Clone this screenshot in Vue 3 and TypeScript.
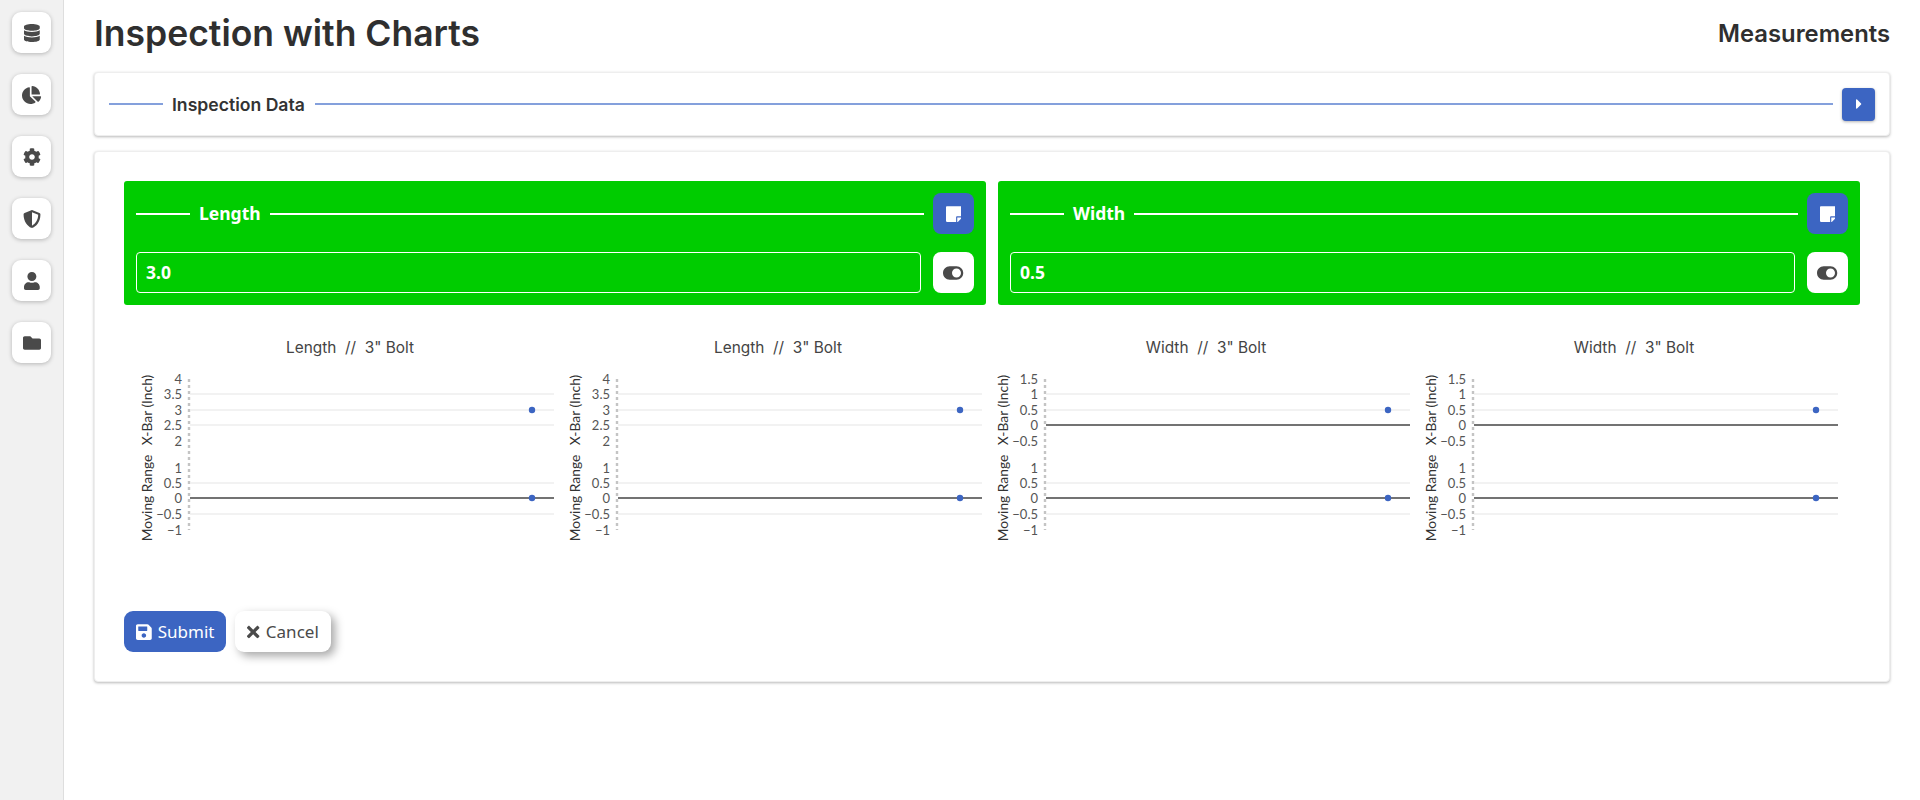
<script setup lang="ts">
interface IconDef {
  box: string
  d: string
}

const icons: Record<string, IconDef> = {
  database: {
    box: '0 0 448 512',
    d: 'M448 73.143v45.714C448 159.143 347.667 192 224 192S0 159.143 0 118.857V73.143C0 32.857 100.333 0 224 0s224 32.857 224 73.143zM448 176v102.857C448 319.143 347.667 352 224 352S0 319.143 0 278.857V176c48.125 33.143 136.208 48.572 224 48.572S399.874 209.143 448 176zm0 160v102.857C448 479.143 347.667 512 224 512S0 479.143 0 438.857V336c48.125 33.143 136.208 48.572 224 48.572S399.874 369.143 448 336z',
  },
  pie: {
    box: '0 0 544 512',
    d: 'M527.79 288H290.5l158.03 158.03c6.04 6.04 15.98 6.53 22.19.68 38.7-36.46 65.32-85.61 73.13-140.86 1.34-9.46-6.51-17.85-16.06-17.85zm-15.83-64.8C503.72 103.74 408.26 8.28 288.8.04 279.68-.59 272 7.1 272 16.24V240h223.77c9.14 0 16.82-7.68 16.19-16.8zM224 288V50.71c0-9.55-8.39-17.4-17.84-16.06C86.99 51.49-4.1 155.6.14 280.37 4.5 408.51 114.83 513.59 243.03 511.98c50.4-.63 96.97-16.87 135.26-44.03 7.9-5.6 8.42-17.23 1.57-24.08L224 288z',
  },
  cog: {
    box: '0 0 512 512',
    d: 'M487.4 315.7l-42.6-24.6c4.3-23.2 4.3-47 0-70.2l42.6-24.6c4.9-2.8 7.1-8.6 5.5-14-11.1-35.6-30-67.8-54.7-94.6-3.8-4.1-10-5.1-14.8-2.3L380.8 110c-17.9-15.4-38.5-27.3-60.8-35.1V25.8c0-5.6-3.9-10.5-9.4-11.7-36.7-8.2-74.3-7.8-109.2 0-5.5 1.2-9.4 6.1-9.4 11.7V75c-22.2 7.9-42.8 19.8-60.8 35.1L88.7 85.5c-4.9-2.8-11-1.9-14.8 2.3-24.7 26.7-43.6 58.9-54.7 94.6-1.7 5.4.6 11.2 5.5 14L67.3 221c-4.3 23.2-4.3 47 0 70.2l-42.6 24.6c-4.9 2.8-7.1 8.6-5.5 14 11.1 35.6 30 67.8 54.7 94.6 3.8 4.1 10 5.1 14.8 2.3l42.6-24.6c17.9 15.4 38.5 27.3 60.8 35.1v49.2c0 5.6 3.9 10.5 9.4 11.7 36.7 8.2 74.3 7.8 109.2 0 5.5-1.2 9.4-6.1 9.4-11.7v-49.2c22.2-7.9 42.8-19.8 60.8-35.1l42.6 24.6c4.9 2.8 11 1.9 14.8-2.3 24.7-26.7 43.6-58.9 54.7-94.6 1.5-5.5-.7-11.3-5.6-14.1zM256 336c-44.1 0-80-35.9-80-80s35.9-80 80-80 80 35.9 80 80-35.9 80-80 80z',
  },
  shield: {
    box: '0 0 512 512',
    d: 'M466.5 83.7l-192-80a48.15 48.15 0 0 0-36.9 0l-192 80C27.7 91.1 16 108.6 16 128c0 198.5 114.5 335.7 221.5 380.3 11.8 4.9 25.1 4.9 36.9 0C360.1 472.6 496 349.3 496 128c0-19.4-11.7-36.9-29.5-44.3zM256.1 446.3l-.1-381 175.9 73.3c-3.3 151.4-82.1 261.1-175.8 307.7z',
  },
  user: {
    box: '0 0 448 512',
    d: 'M224 256c70.7 0 128-57.3 128-128S294.7 0 224 0 96 57.3 96 128s57.3 128 128 128zm89.6 32h-16.7c-22.2 10.2-46.9 16-72.9 16s-50.6-5.8-72.9-16h-16.7C60.2 288 0 348.2 0 422.4V464c0 26.5 21.5 48 48 48h352c26.5 0 48-21.5 48-48v-41.6c0-74.2-60.2-134.4-134.4-134.4z',
  },
  folder: {
    box: '0 0 512 512',
    d: 'M464 128H272l-64-64H48C21.49 64 0 85.49 0 112v288c0 26.51 21.49 48 48 48h416c26.51 0 48-21.49 48-48V176c0-26.51-21.49-48-48-48z',
  },
  caret: {
    box: '0 0 192 512',
    d: 'M0 384.662V127.338c0-17.818 21.543-26.741 34.142-14.142l128.662 128.662c7.81 7.81 7.81 20.474 0 28.284L34.142 398.804C21.543 411.404 0 402.48 0 384.662z',
  },
  note: {
    box: '0 0 448 512',
    d: 'M312 320h136V56c0-13.3-10.7-24-24-24H24C10.7 32 0 42.7 0 56v400c0 13.3 10.7 24 24 24h264V344c0-13.2 10.8-24 24-24zm129 55l-98 98c-4.5 4.5-10.6 7-17 7h-6V352h128v6.1c0 6.3-2.5 12.4-7 16.9z',
  },
  toggle: {
    box: '0 0 576 512',
    d: 'M384 64H192C86 64 0 150 0 256s86 192 192 192h192c106 0 192-86 192-192S490 64 384 64zm0 320c-70.8 0-128-57.3-128-128 0-70.8 57.3-128 128-128 70.8 0 128 57.3 128 128 0 70.8-57.3 128-128 128z',
  },
  save: {
    box: '0 0 448 512',
    d: 'M433.941 129.941l-83.882-83.882A48 48 0 0 0 316.118 32H48C21.49 32 0 53.49 0 80v352c0 26.51 21.49 48 48 48h352c26.51 0 48-21.49 48-48V163.882a48 48 0 0 0-14.059-33.941zM224 416c-35.346 0-64-28.654-64-64 0-35.346 28.654-64 64-64s64 28.654 64 64c0 35.346-28.654 64-64 64zm96-304.52V212c0 6.627-5.373 12-12 12H76c-6.627 0-12-5.373-12-12V108c0-6.627 5.373-12 12-12h228.52c3.183 0 6.235 1.264 8.485 3.515l3.48 3.48A11.996 11.996 0 0 1 320 111.48z',
  },
  times: {
    box: '0 0 352 512',
    d: 'M242.72 256l100.07-100.07c12.28-12.28 12.28-32.19 0-44.48l-22.24-22.24c-12.28-12.28-32.19-12.28-44.48 0L176 189.28 75.93 89.21c-12.28-12.28-32.19-12.28-44.48 0L9.21 111.45c-12.28 12.28-12.28 32.19 0 44.48L109.28 256 9.21 356.07c-12.28 12.28-12.28 32.19 0 44.48l22.24 22.24c12.28 12.28 32.2 12.28 44.48 0L176 322.72l100.07 100.07c12.28 12.28 32.2 12.28 44.48 0l22.24-22.24c12.28-12.28 12.28-32.19 0-44.48L242.72 256z',
  },
}

const navItems = ['database', 'pie', 'cog', 'shield', 'user', 'folder']

const measures = [
  { name: 'Length', value: '3.0' },
  { name: 'Width', value: '0.5' },
]

// y positions of the five ticks in each of the two stacked plots
const topRows = [21, 36, 52, 67, 83]
const bottomRows = [110, 125, 140, 156, 172]

const toTicks = (labels: string[], rows: number[]) =>
  labels.map((label, i) => ({ label, y: rows[i], zero: label === '0' }))

const lengthTop = toTicks(['4', '3.5', '3', '2.5', '2'], topRows)
const widthTop = toTicks(['1.5', '1', '0.5', '0', '−0.5'], topRows)
const rangeTicks = toTicks(['1', '0.5', '0', '−0.5', '−1'], bottomRows)

const charts = [
  { title: 'Length  //  3" Bolt', top: lengthTop },
  { title: 'Length  //  3" Bolt', top: lengthTop },
  { title: 'Width  //  3" Bolt', top: widthTop },
  { title: 'Width  //  3" Bolt', top: widthTop },
]
</script>

<template>
  <div class="page">
    <aside class="sidebar">
      <button v-for="item in navItems" :key="item" class="nav-btn">
        <svg class="icon" :viewBox="icons[item].box"><path :d="icons[item].d" /></svg>
      </button>
    </aside>

    <main class="main">
      <header class="top">
        <h1>Inspection with Charts</h1>
        <h2>Measurements</h2>
      </header>

      <section class="card data-card">
        <span class="rule short blue"></span>
        <span class="data-title">Inspection Data</span>
        <span class="rule blue"></span>
        <button class="square-btn">
          <svg class="icon caret" :viewBox="icons.caret.box"><path :d="icons.caret.d" /></svg>
        </button>
      </section>

      <section class="card body-card">
        <div class="panels">
          <div v-for="m in measures" :key="m.name" class="panel">
            <div class="panel-row">
              <span class="rule short"></span>
              <span class="panel-title">{{ m.name }}</span>
              <span class="rule"></span>
              <button class="panel-btn primary">
                <svg class="icon" :viewBox="icons.note.box"><path :d="icons.note.d" /></svg>
              </button>
            </div>
            <div class="panel-row second">
              <div class="value-box">{{ m.value }}</div>
              <button class="panel-btn">
                <svg class="icon" :viewBox="icons.toggle.box"><path :d="icons.toggle.d" /></svg>
              </button>
            </div>
          </div>
        </div>

        <div class="charts">
          <div v-for="(c, idx) in charts" :key="idx" class="chart">
            <div class="chart-title">{{ c.title }}</div>
            <svg class="plot" width="428" height="233" viewBox="0 0 428 233">
              <text class="axis-title" transform="translate(16 52) rotate(-90)">X-Bar (Inch)</text>
              <text class="axis-title" transform="translate(16 140) rotate(-90)">Moving Range</text>
              <line class="axis" x1="53" x2="53" y1="21" y2="172" />
              <g v-for="t in c.top" :key="t.label">
                <text class="tick" x="46" :y="t.y + 5">{{ t.label }}</text>
                <line
                  v-if="t.y !== 21 && t.y !== 83"
                  :class="t.zero ? 'zero' : 'grid'"
                  x1="54"
                  x2="418"
                  :y1="t.y"
                  :y2="t.y"
                />
              </g>
              <g v-for="t in rangeTicks" :key="'r' + t.label">
                <text class="tick" x="46" :y="t.y + 5">{{ t.label }}</text>
                <line
                  v-if="t.y !== 110 && t.y !== 172"
                  :class="t.zero ? 'zero' : 'grid'"
                  x1="54"
                  x2="418"
                  :y1="t.y"
                  :y2="t.y"
                />
              </g>
              <circle class="dot" cx="396" cy="52" r="3.2" />
              <circle class="dot" cx="396" cy="140" r="3.2" />
            </svg>
          </div>
        </div>

        <div class="actions">
          <button class="action submit">
            <svg class="icon" :viewBox="icons.save.box"><path :d="icons.save.d" /></svg>
            Submit
          </button>
          <button class="action cancel">
            <svg class="icon" :viewBox="icons.times.box"><path :d="icons.times.d" /></svg>
            Cancel
          </button>
        </div>
      </section>
    </main>
  </div>
</template>

<style>
html,
body {
  margin: 0;
  background: #fff;
}
</style>

<style scoped>
.page {
  display: flex;
  min-height: 800px;
  font-family: 'Lato', 'Noto Sans', sans-serif;
  color: #4a4a4a;
}

.sidebar {
  flex-shrink: 0;
  background: #f1f1f1;
  border-right: 1px solid #dedede;
  padding: 12px 0 0 12px;
  box-sizing: border-box;
  width: 64px;
  display: flex;
  flex-direction: column;
  gap: 21px;
}

button {
  border: none;
  padding: 0;
  cursor: pointer;
  font: inherit;
}

.icon {
  display: block;
  height: 18px;
  fill: currentColor;
}

.nav-btn {
  width: 39px;
  height: 41px;
  padding-left: 1px;
  background: #fff;
  color: #4a4a4a;
  border-radius: 9px;
  box-shadow: 0 1px 4px rgba(0, 0, 0, 0.25);
  display: flex;
  align-items: center;
  justify-content: center;
}

.main {
  flex: 1;
  min-width: 0;
  padding: 0 30px;
}

.top {
  height: 72px;
  display: flex;
  align-items: center;
  justify-content: space-between;
  padding-bottom: 6px;
  box-sizing: border-box;
}

h1 {
  margin: 0;
  font-family: 'Inter', 'Liberation Sans', sans-serif;
  font-size: 35.5px;
  font-weight: 600;
  color: #2f2f2f;
}

h2 {
  margin: 0;
  font-family: 'Inter', 'Liberation Sans', sans-serif;
  font-size: 23.8px;
  font-weight: 600;
  color: #2f2f2f;
}

.card {
  background: #fff;
  border-radius: 4px;
  border: 1px solid #eee;
  box-shadow: 0 1px 3px rgba(0, 0, 0, 0.28);
  box-sizing: border-box;
}

.data-card {
  height: 64px;
  padding: 0 14px;
  display: flex;
  align-items: center;
}

.rule {
  flex: 1;
  height: 2px;
  background: #fff;
}

.rule.short {
  flex: 0 0 54px;
}

.rule.blue {
  background: #84a0dc;
}

.data-title {
  margin: 0 10px 0 9px;
  font-family: 'Inter', 'Liberation Sans', sans-serif;
  font-size: 17.6px;
  font-weight: 600;
  color: #333;
}

.square-btn {
  width: 33px;
  height: 33px;
  margin-left: 9px;
  border-radius: 4px;
  background: #3c65c2;
  color: #fff;
  box-shadow: 0 1px 3px rgba(0, 0, 0, 0.3);
  display: flex;
  align-items: center;
  justify-content: center;
}

.icon.caret {
  height: 16px;
}

.body-card {
  margin-top: 15px;
  padding: 29px;
}

.panels {
  display: grid;
  grid-template-columns: 1fr 1fr;
  gap: 12px;
}

.panel {
  background: #00cc00;
  border-radius: 3px;
  padding: 12px;
  display: flex;
  flex-direction: column;
  gap: 18px;
}

.panel-row {
  display: flex;
  align-items: center;
}

.panel-title {
  margin: 0 9px;
  color: #fff;
  font-family: 'Noto Sans', 'Lato', sans-serif;
  font-size: 17.5px;
  font-weight: 700;
  position: relative;
  top: -1px;
}

.panel-btn {
  width: 41px;
  height: 41px;
  margin-left: 9px;
  flex-shrink: 0;
  border-radius: 8px;
  background: #fff;
  color: #4a4a4a;
  display: flex;
  align-items: center;
  justify-content: center;
}

.panel-btn.primary {
  background: #3c65c2;
  color: #fff;
}

.panel-row.second .panel-btn {
  margin-left: 12px;
}

.value-box {
  flex: 1;
  height: 41px;
  box-sizing: border-box;
  border: 1px solid #fff;
  border-radius: 4px;
  padding: 0 9px 2px;
  display: flex;
  align-items: center;
  color: #fff;
  font-family: 'Noto Sans', 'Lato', sans-serif;
  font-size: 17.5px;
  font-weight: 700;
}

.charts {
  display: grid;
  grid-template-columns: repeat(4, 428px);
  justify-content: center;
  margin-top: 33px;
}

.chart-title {
  height: 20px;
  line-height: 20px;
  text-align: center;
  font-family: 'Inter', 'Liberation Sans', sans-serif;
  font-size: 15.4px;
  color: #444;
  white-space: pre;
}

.plot {
  display: block;
  margin-bottom: 20px;
}

.axis-title {
  font-size: 13.8px;
  fill: #333;
  text-anchor: middle;
}

.tick {
  font-size: 13px;
  fill: #555;
  text-anchor: end;
}

.axis {
  stroke: #c4c4c4;
  stroke-width: 2.4;
  stroke-dasharray: 3 3;
}

.grid {
  stroke: #eee;
  stroke-width: 1.5;
}

.zero {
  stroke: #444;
  stroke-width: 1.5;
}

.dot {
  fill: #3c65c2;
}

.actions {
  display: flex;
  gap: 9px;
}

.action {
  height: 41px;
  padding: 0 12px;
  border-radius: 9px;
  font-family: 'Noto Sans', 'Lato', sans-serif;
  font-size: 17px;
  display: flex;
  align-items: center;
  gap: 6px;
}

.submit {
  background: #3c65c2;
  color: #fff;
}

.cancel {
  background: #fff;
  color: #4a4a4a;
  box-shadow: 4px 4px 10px rgba(0, 0, 0, 0.35);
}
</style>
